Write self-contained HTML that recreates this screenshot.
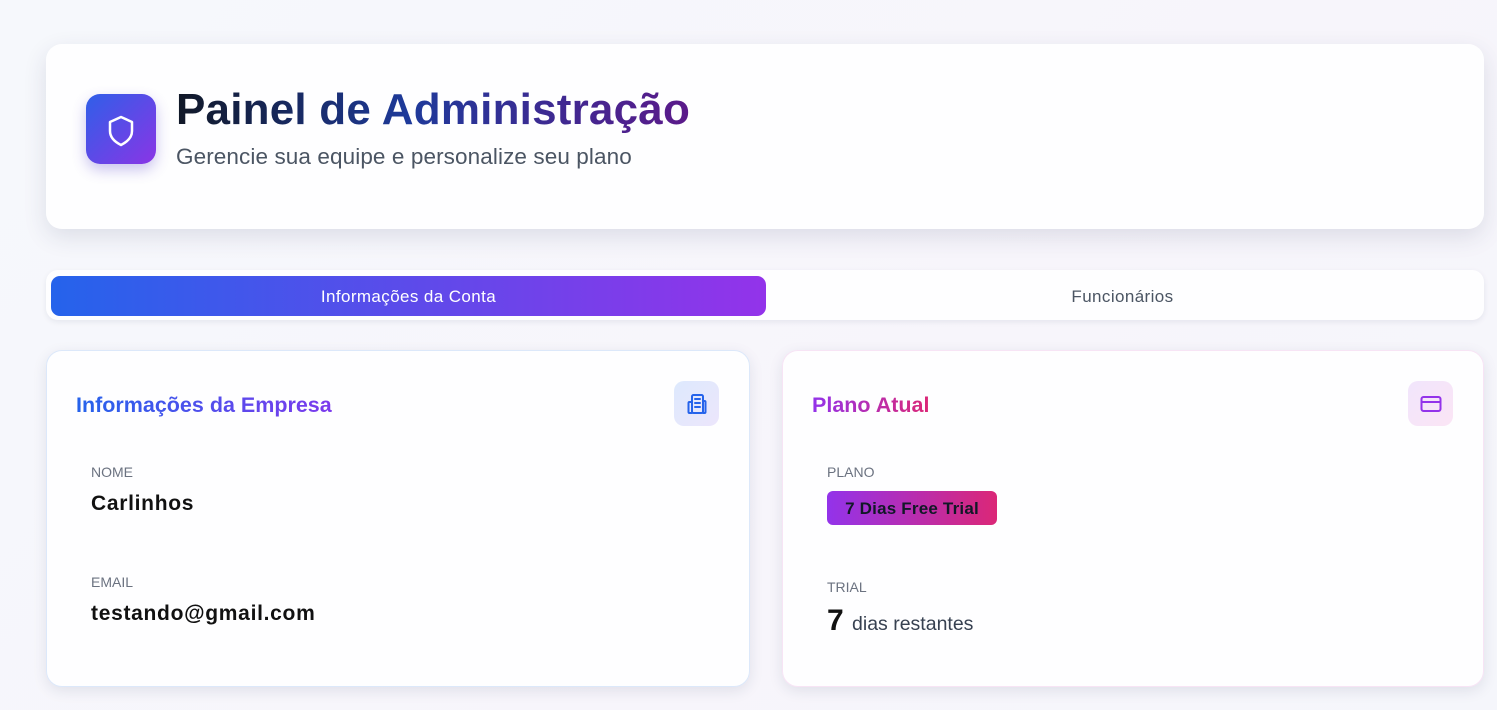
<!DOCTYPE html>
<html><head><meta charset="utf-8"><style>
*{box-sizing:border-box;margin:0;padding:0}
body{width:1497px;height:710px;overflow:hidden;font-family:"Liberation Sans",sans-serif;background:linear-gradient(135deg,#f6f8fc,#f7f5fb 60%,#f5f6fb);position:relative}
.card{position:absolute;background:rgba(255,255,255,.85);border-radius:16px;box-shadow:0 8px 24px rgba(30,40,80,.12)}
.hdr{left:46px;top:44px;width:1438px;height:185px}
.logo{position:absolute;left:40px;top:50px;width:70px;height:70px;border-radius:14px;background:linear-gradient(135deg,#2f5fe8,#8a35e6);box-shadow:0 6px 14px rgba(80,60,200,.3)}
h1{position:absolute;left:130px;top:40px;font-size:44px;font-weight:bold;letter-spacing:.2px;background:linear-gradient(90deg,#111827,#1e3a9a 45%,#5b1a8a);-webkit-background-clip:text;color:transparent;line-height:1.2}
.sub{position:absolute;left:130px;top:100px;font-size:22.5px;letter-spacing:.1px;color:#4b5563}
.tabs{left:46px;top:270px;width:1438px;height:50px;border-radius:12px;box-shadow:0 2px 6px rgba(30,40,80,.08)}
.t1{position:absolute;left:5px;top:6px;width:715px;height:40px;border-radius:9px;background:linear-gradient(90deg,#2563eb,#9333ea);color:#fff;font-size:17px;letter-spacing:.4px;text-align:center;line-height:42px}
.t2{position:absolute;left:720px;top:6px;width:713px;height:40px;color:#4b5563;font-size:17px;letter-spacing:.4px;text-align:center;line-height:42px}
.c{top:350px;height:337px;border:1px solid #dce8fa;box-shadow:0 4px 14px rgba(30,40,80,.1)}
.c h2{position:absolute;left:29px;top:42px;font-size:21.5px;font-weight:bold;-webkit-background-clip:text;color:transparent}
.ic{position:absolute;top:30px;right:30px;width:45px;height:45px;border-radius:10px;display:flex;align-items:center;justify-content:center}
.lb{position:absolute;left:44px;font-size:14px;color:#6b7280}
.vl{position:absolute;left:44px;font-size:21px;font-weight:bold;color:#111;letter-spacing:.7px}
</style></head><body>
<div class="card hdr">
 <div class="logo"><svg width="70" height="70" viewBox="0 0 70 70"><path d="M35 23 l11 5 v9 c0 7-5 11-11 14 c-6-3-11-7-11-14 v-9z" fill="none" stroke="#fff" stroke-width="2.5" stroke-linejoin="round"/></svg></div>
 <h1>Painel de Administração</h1>
 <div class="sub">Gerencie sua equipe e personalize seu plano</div>
</div>
<div class="card tabs"><div class="t1">Informações da Conta</div><div class="t2">Funcionários</div></div>
<div class="card c" style="left:46px;width:704px">
 <h2 style="background-image:linear-gradient(90deg,#2563eb,#7c3aed)">Informações da Empresa</h2>
 <div class="ic" style="background:linear-gradient(135deg,#dde9fd,#ece6fc)"><svg width="24" height="24" viewBox="0 0 24 24" fill="none" stroke="#2563eb" stroke-width="2" stroke-linecap="round"><rect x="7" y="3" width="11" height="18" rx="1.5"/><path d="M7 10H4.5a1 1 0 0 0-1 1v9a1 1 0 0 0 1 1H7M18 9h1.5a1 1 0 0 1 1 1v10a1 1 0 0 1-1 1H18M10 7h5M10 11h5M10 15h5"/></svg></div>
 <div class="lb" style="top:113px">NOME</div><div class="vl" style="top:141px">Carlinhos</div>
 <div class="lb" style="top:223px">EMAIL</div><div class="vl" style="top:251px">testando@gmail.com</div>
</div>
<div class="card c" style="left:782px;width:702px;border-color:#f7e4f5">
 <h2 style="background-image:linear-gradient(90deg,#9333ea,#db2777)">Plano Atual</h2>
 <div class="ic" style="background:linear-gradient(135deg,#f1e5fc,#fbe5f5)"><svg width="24" height="24" viewBox="0 0 24 24" fill="none" stroke="#9333ea" stroke-width="2"><rect x="2.5" y="5" width="19" height="14" rx="2"/><path d="M2.5 10h19"/></svg></div>
 <div class="lb" style="top:113px">PLANO</div>
 <div style="position:absolute;left:44px;top:140px;width:170px;height:34px;border-radius:6px;background:linear-gradient(90deg,#9333ea,#db2777);font-weight:bold;font-size:17px;letter-spacing:.2px;color:#111827;text-align:center;line-height:35px">7 Dias Free Trial</div>
 <div class="lb" style="top:228px">TRIAL</div>
 <div style="position:absolute;left:44px;top:253px;font-size:30px;font-weight:bold;color:#111">7 <span style="font-size:19.5px;font-weight:normal;color:#374151">dias restantes</span></div>
</div>
</body></html>
